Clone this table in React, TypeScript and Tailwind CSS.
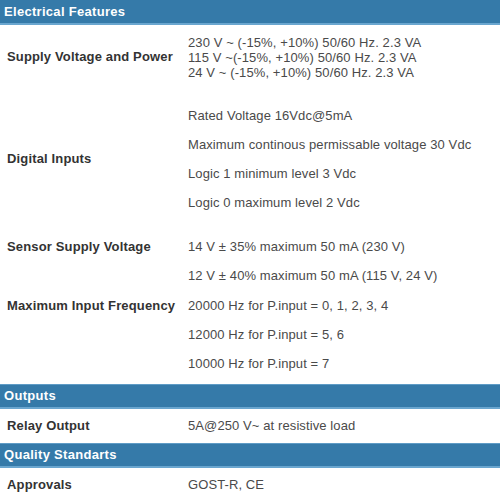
import React from "react";

const font = { fontFamily: '"Liberation Sans", Arial, sans-serif' };

function Header({ title }: { title: string }) {
  return (
    <div className="h-[25px] bg-[#357aa9] border-t border-t-[#5f9cc6] border-b-2 border-b-[#6aa6cf] flex items-center pl-[4px]">
      <span className="text-white font-bold text-[13px] tracking-[0.3px]">{title}</span>
    </div>
  );
}

function Label({ children }: { children: React.ReactNode }) {
  return <div className="pl-[7px] font-bold text-[13px] tracking-[0.15px] text-[#333]">{children}</div>;
}

function Line({ children }: { children: React.ReactNode }) {
  return <div className="h-[29px] flex items-center">{children}</div>;
}

export default function App() {
  return (
    <div className="w-[500px] h-[495px] overflow-hidden bg-white text-[13px] tracking-[0.1px] text-[#4a4a4a]" style={font}>
      <div className="h-[25px] bg-[#357aa9] border-b-2 border-b-[#6aa6cf] flex items-center pl-[4px]">
        <span className="text-white font-bold text-[13px] tracking-[0.3px]">Electrical Features</span>
      </div>

      {/* Supply Voltage */}
      <div className="grid grid-cols-[188px_1fr] h-[64px] items-center">
        <Label>Supply Voltage and Power</Label>
        <div className="leading-[15px] pt-[1px]">
          <div>230 V ~ (-15%, +10%) 50/60 Hz. 2.3 VA</div>
          <div>115 V ~(-15%, +10%) 50/60 Hz. 2.3 VA</div>
          <div>24 V ~ (-15%, +10%) 50/60 Hz. 2.3 VA</div>
        </div>
      </div>

      {/* Digital Inputs */}
      <div className="grid grid-cols-[188px_1fr] pt-[12px] pb-[15px] items-center">
        <Label>Digital Inputs</Label>
        <div>
          <Line>Rated Voltage 16Vdc@5mA</Line>
          <Line>Maximum continous permissable voltage 30 Vdc</Line>
          <Line>Logic 1 minimum level 3 Vdc</Line>
          <Line>Logic 0 maximum level 2 Vdc</Line>
        </div>
      </div>

      {/* Sensor Supply */}
      <div className="grid grid-cols-[188px_1fr] items-start">
        <div className="h-[29px] flex items-center">
          <Label>Sensor Supply Voltage</Label>
        </div>
        <div>
          <Line>14 V ± 35% maximum 50 mA (230 V)</Line>
          <Line>12 V ± 40% maximum 50 mA (115 V, 24 V)</Line>
        </div>
      </div>

      {/* Max Input Frequency */}
      <div className="grid grid-cols-[188px_1fr] items-start pt-[1px] pb-[6px]">
        <div className="h-[29px] flex items-center">
          <Label>Maximum Input Frequency</Label>
        </div>
        <div>
          <Line>20000 Hz for P.input = 0, 1, 2, 3, 4</Line>
          <Line>12000 Hz for P.input = 5, 6</Line>
          <Line>10000 Hz for P.input = 7</Line>
        </div>
      </div>

      <Header title="Outputs" />
      <div className="grid grid-cols-[188px_1fr] h-[34px] pb-[1px] items-center">
        <Label>Relay Output</Label>
        <div>5A@250 V~ at resistive load</div>
      </div>

      <Header title="Quality Standarts" />
      <div className="grid grid-cols-[188px_1fr] h-[34px] items-center">
        <Label>Approvals</Label>
        <div>GOST-R, CE</div>
      </div>
    </div>
  );
}
